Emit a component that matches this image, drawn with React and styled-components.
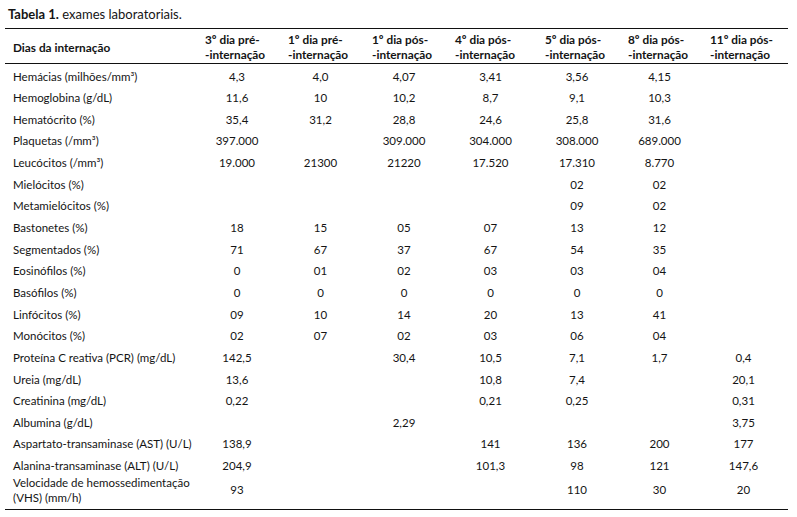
import React from "react";
import styled, { createGlobalStyle } from "styled-components";

const GlobalStyle = createGlobalStyle`
  html, body {
    margin: 0;
    padding: 0;
    background: #ffffff;
  }
  body {
    font-family: Lato, "Open Sans", "Liberation Sans", sans-serif;
    color: #141414;
  }
`;

const columns = [
  ["3º dia pré-", "-internação"],
  ["1º dia pré-", "-internação"],
  ["1º dia pós-", "-internação"],
  ["4º dia pós-", "-internação"],
  ["5º dia pós-", "-internação"],
  ["8º dia pós-", "-internação"],
  ["11º dia pós-", "-internação"],
];

const widths = [192, 83, 84, 83, 90, 83, 82, 86];

const rows = [
  ["Hemácias (milhões/mm³)", "4,3", "4,0", "4,07", "3,41", "3,56", "4,15", ""],
  ["Hemoglobina (g/dL)", "11,6", "10", "10,2", "8,7", "9,1", "10,3", ""],
  ["Hematócrito (%)", "35,4", "31,2", "28,8", "24,6", "25,8", "31,6", ""],
  ["Plaquetas (/mm³)", "397.000", "", "309.000", "304.000", "308.000", "689.000", ""],
  ["Leucócitos (/mm³)", "19.000", "21300", "21220", "17.520", "17.310", "8.770", ""],
  ["Mielócitos (%)", "", "", "", "", "02", "02", ""],
  ["Metamielócitos (%)", "", "", "", "", "09", "02", ""],
  ["Bastonetes (%)", "18", "15", "05", "07", "13", "12", ""],
  ["Segmentados (%)", "71", "67", "37", "67", "54", "35", ""],
  ["Eosinófilos (%)", "0", "01", "02", "03", "03", "04", ""],
  ["Basófilos (%)", "0", "0", "0", "0", "0", "0", ""],
  ["Linfócitos (%)", "09", "10", "14", "20", "13", "41", ""],
  ["Monócitos (%)", "02", "07", "02", "03", "06", "04", ""],
  ["Proteína C reativa (PCR) (mg/dL)", "142,5", "", "30,4", "10,5", "7,1", "1,7", "0,4"],
  ["Ureia (mg/dL)", "13,6", "", "", "10,8", "7,4", "", "20,1"],
  ["Creatinina (mg/dL)", "0,22", "", "", "0,21", "0,25", "", "0,31"],
  ["Albumina (g/dL)", "", "", "2,29", "", "", "", "3,75"],
  ["Aspartato-transaminase (AST) (U/L)", "138,9", "", "", "141", "136", "200", "177"],
  ["Alanina-transaminase (ALT) (U/L)", "204,9", "", "", "101,3", "98", "121", "147,6"],
];

const vhs = ["93", "", "", "", "110", "30", "20"];

const Page = styled.div`
  padding: 6px 9px 0 5px;
`;

const Caption = styled.div`
  font-size: 13px;
  line-height: 16px;
  padding-left: 3px;
  margin-bottom: 6px;

  b {
    font-weight: 700;
  }
`;

const Table = styled.table`
  width: 783px;
  border-collapse: collapse;
  table-layout: fixed;
  font-size: 11.5px;
  border-top: 1.5px solid #111;
  border-bottom: 1.5px solid #111;
`;

const HeadRow = styled.tr`
  border-bottom: 1.5px solid #111;
`;

const HeadCell = styled.th`
  font-weight: 700;
  font-size: 11.8px;
  text-align: left;
  line-height: 15px;
  padding: 3px ${(p) => (p.$first ? 0 : 11)}px 1px 8px;
  vertical-align: middle;
  white-space: nowrap;
`;

const Row = styled.tr`
  height: ${(p) => (p.$tall ? 34 : 21.67)}px;
`;

const Label = styled.td`
  text-align: left;
  padding: ${(p) => (p.$tall ? "0 0 4px" : "3px 0 0")} 8px;
  line-height: 15px;
  vertical-align: middle;
  white-space: nowrap;
`;

const Value = styled.td`
  text-align: center;
  padding: ${(p) => (p.$tall ? "0 11px 4px 8px" : "3px 11px 0 8px")};
  line-height: 15px;
  vertical-align: middle;
  white-space: nowrap;
`;

export default function App() {
  return (
    <>
      <GlobalStyle />
      <Page>
        <Caption>
          <b>Tabela 1.</b> exames laboratoriais.
        </Caption>
        <Table>
          <colgroup>
            {widths.map((w, i) => (
              <col key={i} style={{ width: w }} />
            ))}
          </colgroup>
          <thead>
            <HeadRow>
              <HeadCell $first>Dias da internação</HeadCell>
              {columns.map((c) => (
                <HeadCell key={c[0]}>
                  {c[0]}
                  <br />
                  {c[1]}
                </HeadCell>
              ))}
            </HeadRow>
          </thead>
          <tbody>
            {rows.map((r) => (
              <Row key={r[0]}>
                <Label>{r[0]}</Label>
                {r.slice(1).map((v, i) => (
                  <Value key={i}>{v}</Value>
                ))}
              </Row>
            ))}
            <Row $tall>
              <Label $tall>
                Velocidade de hemossedimentação
                <br />
                (VHS) (mm/h)
              </Label>
              {vhs.map((v, i) => (
                <Value $tall key={i}>
                  {v}
                </Value>
              ))}
            </Row>
          </tbody>
        </Table>
      </Page>
    </>
  );
}
